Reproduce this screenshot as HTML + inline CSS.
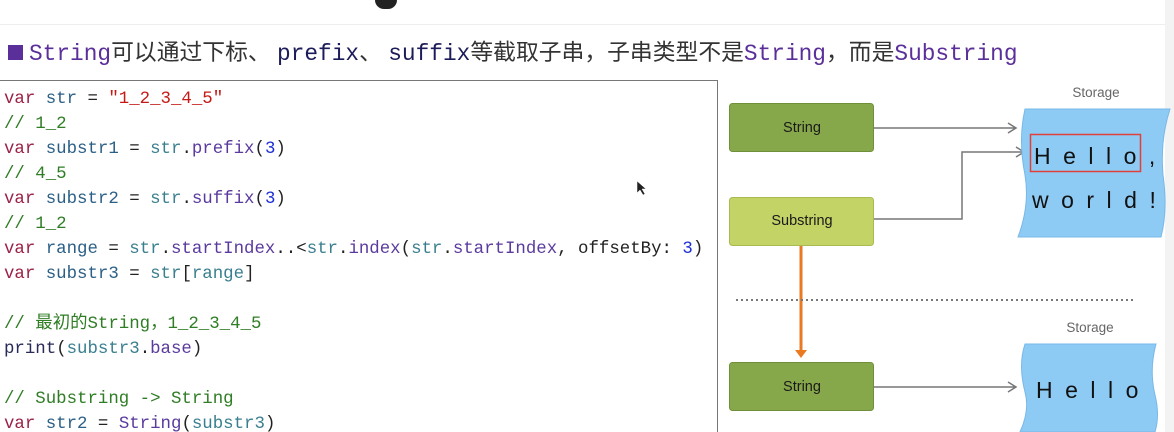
<!DOCTYPE html>
<html style="overflow:hidden;height:432px"><head><meta charset="utf-8"><style>
body{margin:0;width:1174px;height:432px;overflow:hidden;background:#fff;position:relative;font-family:"Liberation Sans","Noto Sans CJK SC",sans-serif}
.hl{position:absolute;left:8px;top:34px;font-size:22.8px;color:#333;white-space:nowrap}
.m{font-family:"Liberation Mono",monospace}
.code{position:absolute;left:0;top:80px;width:718px;height:353px;border:1px solid #777;border-left:none;border-bottom:none;box-sizing:border-box;overflow:hidden}
pre{margin:0;position:absolute;left:4px;top:6px;font-family:"Liberation Mono",monospace;font-size:17.4px;line-height:25px;color:#222}
.k{color:#9b2247}.v{color:#2b5f86}.s{color:#c41a16}.c{color:#2f7d25}.t{color:#3a7f8f}.p{color:#5a3a9e}.n{color:#1c2ed6}
</style></head><body>
<div style="position:absolute;left:375px;top:0;width:22px;height:9px;background:#222;border-radius:0 0 10px 10px"></div>
<div style="position:absolute;left:0;top:24px;width:1174px;height:1px;background:#eee"></div>
<div class="hl"><span style="display:inline-block;width:15px;height:15px;background:#5b2f9a;margin-right:6px"></span><span class="m" style="color:#5b2f9a">String</span>可以通过下标、 <span class="m" style="color:#1c1c5a">prefix</span>、 <span class="m" style="color:#1c1c5a">suffix</span>等截取子串，子串类型不是<span class="m" style="color:#5b2f9a">String</span>，而是<span class="m" style="color:#5b2f9a">Substring</span></div>
<div class="code"><pre><span class="k">var</span> <span class="v">str</span> = <span class="s">"1_2_3_4_5"</span>
<span class="c">// 1_2</span>
<span class="k">var</span> <span class="v">substr1</span> = <span class="t">str</span>.<span class="p">prefix</span>(<span class="n">3</span>)
<span class="c">// 4_5</span>
<span class="k">var</span> <span class="v">substr2</span> = <span class="t">str</span>.<span class="p">suffix</span>(<span class="n">3</span>)
<span class="c">// 1_2</span>
<span class="k">var</span> <span class="v">range</span> = <span class="t">str</span>.<span class="p">startIndex</span>..&lt;<span class="t">str</span>.<span class="p">index</span>(<span class="t">str</span>.<span class="p">startIndex</span>, offsetBy: <span class="n">3</span>)
<span class="k">var</span> <span class="v">substr3</span> = <span class="t">str</span>[<span class="t">range</span>]

<span class="c">// 最初的String，1_2_3_4_5</span>
<span class="p" style="color:#2a2a5a">print</span>(<span class="t">substr3</span>.<span class="p">base</span>)

<span class="c">// Substring -&gt; String</span>
<span class="k">var</span> <span class="v">str2</span> = <span class="p">String</span>(<span class="t">substr3</span>)</pre></div>
<svg style="position:absolute;left:0;top:0" width="1174" height="432">
<rect x="1165" y="0" width="9" height="432" fill="#f3f3f3"/>
<g font-family="Liberation Sans,sans-serif" font-size="14.5" fill="#1a1a1a" text-anchor="middle">
<rect x="729.5" y="103.5" width="144" height="48" rx="3" fill="#87a84a" stroke="#6f8f3a"/>
<text x="802" y="132">String</text>
<rect x="729.5" y="197.5" width="144" height="48" rx="3" fill="#c3d366" stroke="#a9bb50"/>
<text x="802" y="225">Substring</text>
<rect x="729.5" y="362.5" width="144" height="48" rx="3" fill="#87a84a" stroke="#6f8f3a"/>
<text x="802" y="391">String</text>
</g>
<g stroke="#777" stroke-width="1.5" fill="none">
<path d="M874 128H1016M1008 123l8 5-8 5"/>
<path d="M874 219H962V152H1024M1016 147l8 5-8 5"/>
<path d="M874 387H1016M1008 382l8 5-8 5"/>
</g>
<path d="M801 246V350" stroke="#ea7a22" stroke-width="3"/>
<path d="M795 350h12l-6 8z" fill="#ea7a22"/>
<line x1="736" y1="300" x2="1136" y2="300" stroke="#777" stroke-width="2" stroke-dasharray="2 3"/>
<g font-family="Liberation Sans,sans-serif" font-size="13.5" fill="#666" text-anchor="middle">
<text x="1096" y="97">Storage</text><text x="1090" y="332">Storage</text></g>
<path d="M1025 109H1170Q1160 140 1163 175Q1168 210 1161 237H1018Q1030 205 1025 175Q1018 140 1025 109Z" fill="#8ecbf4" stroke="#78b8e8"/>
<path d="M1025 344H1156Q1149 370 1155 395Q1160 415 1155 432H1020Q1030 410 1025 392Q1018 365 1025 344Z" fill="#8ecbf4" stroke="#78b8e8"/>
<rect x="1030.5" y="134.5" width="110" height="37" fill="none" stroke="#e0403a" stroke-width="1.5"/>
<g font-family="Liberation Sans,sans-serif" font-size="23" fill="#111" letter-spacing="12.5">
<text x="1034" y="164">Hello,</text>
<text x="1032" y="208">world!</text>
<text x="1036" y="398">Hello</text>
</g>
<path d="M637 181l0 12 3-3 3 5 2-1-3-5h4z" fill="#222" stroke="#fff" stroke-width=".5"/>
</svg>
</body></html>
